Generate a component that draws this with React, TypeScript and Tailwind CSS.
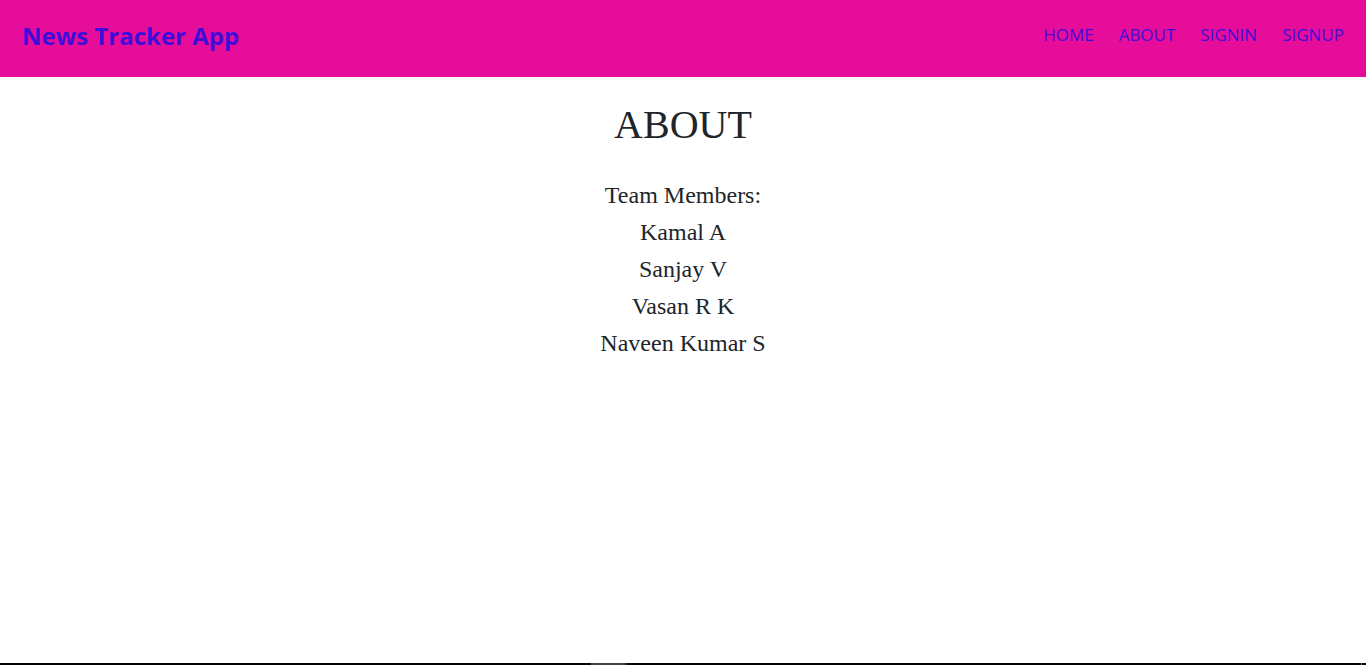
const links = ["HOME", "ABOUT", "SIGNIN", "SIGNUP"];
const members = ["Kamal A", "Sanjay V", "Vasan R K", "Naveen Kumar S"];

export default function App() {
  return (
    <div className="flex min-h-screen flex-col bg-white text-[#212529]">
      <header className="flex items-start justify-between bg-[#e60d9a] px-[22px] pt-4 pb-[21px] font-['Open_Sans','Noto_Sans',sans-serif] text-[#3f0dd9]">
        <a href="#home" className="text-2xl leading-10 font-bold">News Tracker App</a>
        <nav className="flex gap-[25px] pt-[7px]">
          {links.map((l) => (
            <a key={l} href={"#" + l.toLowerCase()} className="text-[17px] leading-6">{l}</a>
          ))}
        </nav>
      </header>
      <main className="flex-1 pt-6 text-center font-['Liberation_Serif',serif]">
        <h1 className="text-[40px] leading-12">ABOUT</h1>
        <div className="mt-7 text-2xl leading-[37px]">
          <p>Team Members:</p>
          <ul>
            {members.map((m) => (
              <li key={m}>{m}</li>
            ))}
          </ul>
        </div>
      </main>
      <footer className="grid h-0.5 grid-cols-[4fr_36px_5fr] bg-[#080406]">
        <span />
        <span className="flex bg-[#333333]">
          <span className="w-8 bg-[#444444]" />
        </span>
        <span className="mr-1 border-r border-[#777777]" />
      </footer>
    </div>
  );
}
